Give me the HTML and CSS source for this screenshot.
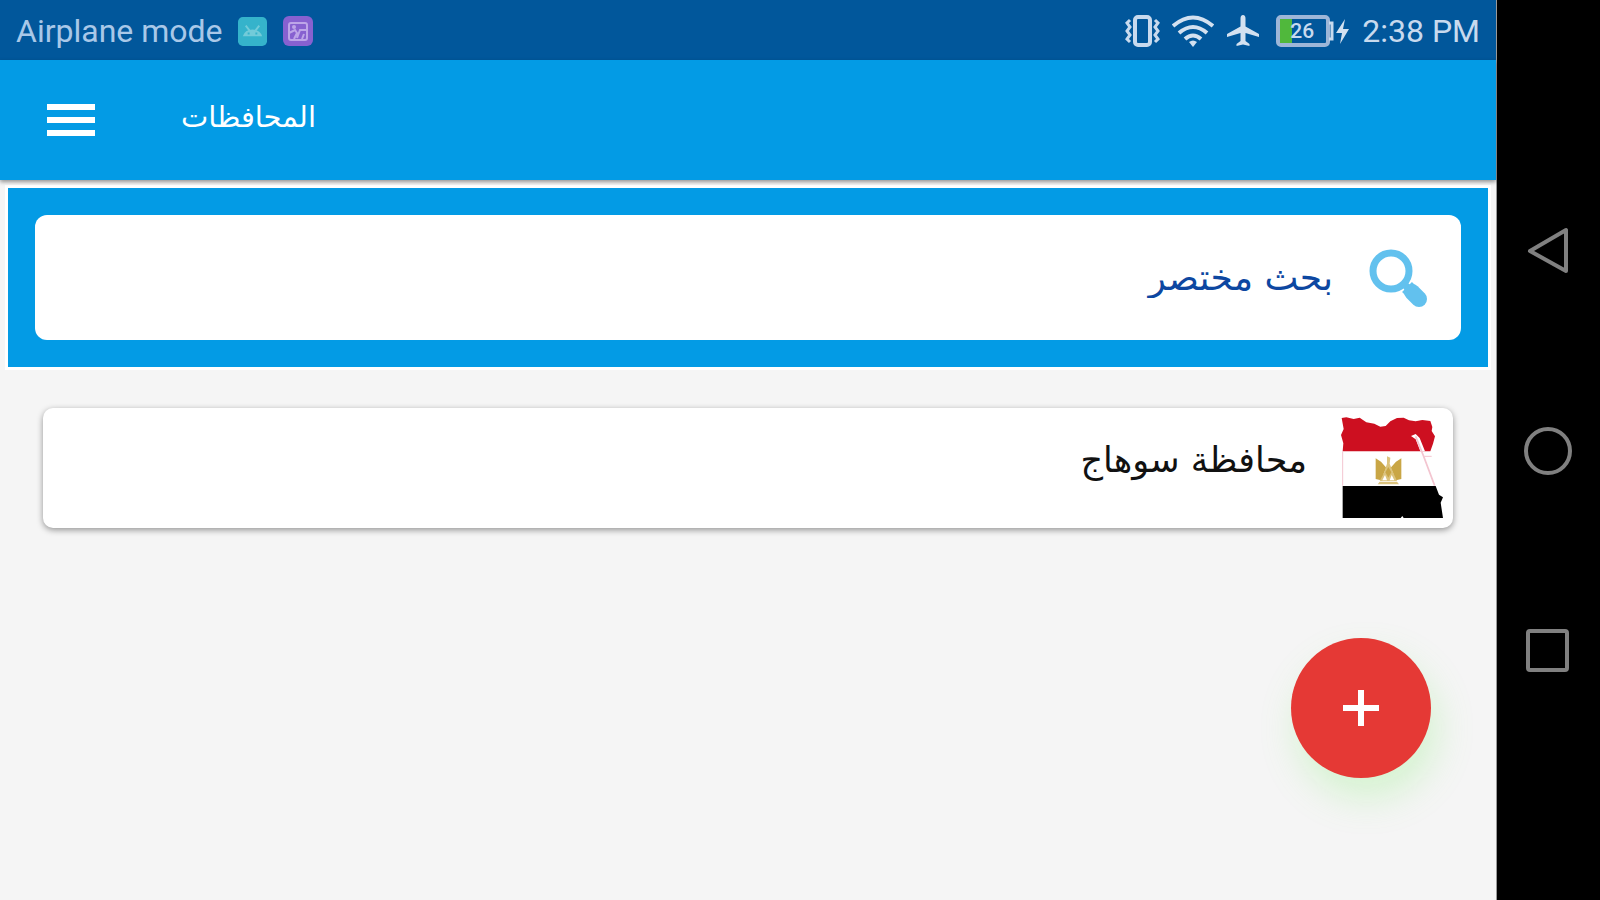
FILE: index.html
```html
<!DOCTYPE html>
<html lang="ar">
<head>
    <meta charset="UTF-8">
    <meta name="viewport" content="width=device-width, initial-scale=1">
    <title>المحافظات</title>
    <link rel="stylesheet" href="styles.css">
</head>
<body>
    <div class="screen">
        <div class="status-bar">
            <span class="carrier" lang="en">Airplane mode</span>
            <svg class="notice" viewBox="0 0 30 30">
                <rect width="30" height="30" rx="5" fill="#35b3cb"/>
                <path d="M5 20q2-7 10-7t10 7z" fill="#72cbd9"/>
                <path d="M8 9l4 5M22 9l-4 5" stroke="#72cbd9" stroke-width="2"/>
                <path d="M10 17h2M18 17h2" stroke="#35b3cb" stroke-width="2"/>
            </svg>
            <svg class="notice notice-photo" viewBox="0 0 30 30">
                <rect width="30" height="30" rx="6" fill="#8761d0"/>
                <g fill="none" stroke="#bda5e8" stroke-width="2">
                    <rect x="6" y="7" width="18" height="17" rx="2"/>
                    <path d="M6 17l6-3 2 3-3 6M14 22l3-8h7M19 23l2-5"/>
                </g>
                <circle cx="11" cy="11" r="2" fill="#bda5e8"/>
            </svg>
            <div class="status-icons" lang="en">
                <svg width="36" height="32" viewBox="0 0 36 32" fill="none" stroke="#c8daee">
                    <rect x="11" y="2" width="15" height="28" rx="3" stroke-width="4"/>
                    <path d="M6 5L3 8l3 4-3 4 3 4-3 4 3 3M31 5l3 3-3 4 3 4-3 4 3 4-3 3" stroke-width="3"/>
                </svg>
                <svg class="wifi" width="42" height="32" viewBox="0 0 42 32" fill="none" stroke="#d3e1f0" stroke-width="4">
                    <path d="M1 11q20-17 40 0M7 18q14-12 28 0M13 24q8-7 16 0"/>
                    <path d="M17 27q4-3 8 0l-4 5z" fill="#d3e1f0" stroke="none"/>
                </svg>
                <svg class="plane" width="34" height="32" viewBox="0 0 34 32">
                    <path d="M14.500 3.500a2.500 3.500 0 0 1 5 0v8L33 19v3l-13.500-4v8l4 3v2L17 29.500 10.500 31v-2l4-3v-8L1 22v-3l13.500-7.500z" fill="#d3e1f0"/>
                </svg>
                <div class="battery">
                    <svg width="74" height="34" viewBox="0 0 74 34">
                        <rect x="2" y="3" width="50" height="28" rx="3" fill="none" stroke="#9db6d8" stroke-width="4"/>
                        <path d="M53 9h3v16h-3" fill="none" stroke="#c8daee" stroke-width="3"/>
                        <rect x="4" y="5" width="12" height="24" fill="#50b83c"/>
                        <path d="M69 5l-9 14h6l-2 11 9-15h-6z" fill="#d3e1f0"/>
                    </svg>
                    <span class="level">26</span>
                </div>
                <span class="clock">2:38 PM</span>
            </div>
        </div>

        <header class="app-bar">
            <button class="menu" type="button" aria-label="القائمة">
                <svg width="48" height="34" viewBox="0 0 48 34" fill="#fff">
                    <path d="M0 1h48v6H0zM0 14h48v6H0zM0 27h48v6H0z"/>
                </svg>
            </button>
            <h1>المحافظات</h1>
        </header>

        <main>
            <form class="search-panel" role="search" dir="rtl">
                <div class="search-box">
                    <label for="search" aria-label="بحث">
                        <svg width="60" height="60" viewBox="0 0 60 60" fill="none" stroke="#62c1ee">
                            <circle cx="22" cy="23" r="18" stroke-width="7"/>
                            <path d="M34 35l5 5" stroke-width="7"/>
                            <path d="M38 39l6 6" stroke-width="14"/>
                            <path d="M43 44l7 7" stroke-width="16" stroke-linecap="round"/>
                        </svg>
                    </label>
                    <input id="search" type="text" placeholder="بحث مختصر">
                </div>
            </form>

            <ul class="list" dir="rtl">
                <li class="card">
                    <svg class="flag" width="102" height="103" viewBox="0 0 306 309">
                        <path d="M2 3l14-2 22 5 18-4 20 14 24 4 18 9 16-2 14-14 20-10 20-1 16 8 20 3 20-4 24 3 6 18-2 12 10 16-6 22-8 23H5l2-24-7-25 8-18z" fill="#cd0f20"/>
                        <path d="M5 103v103M250 118h22" fill="none" stroke="#f3c5d0" stroke-width="3"/>
                        <path d="M210 57l14-6 12 12 16 40h-14l-14-36z" fill="#fff"/>
                        <path d="M224 58l24 60 33 88" fill="none" stroke="#f3c5d0" stroke-width="5"/>
                        <path d="M5 207h279l10 26 12 8-7 16 7 46H188l-4-6-5 6H5z" fill="#000"/>
                        <g fill="#c9a646">
                            <path d="M104 124l16 10 16 18-8 18 4 16-12 4-16-4z"/>
                            <path d="M181 124l-16 10-16 18 8 18-4 16 12 4 16-4z"/>
                            <path d="M116 194h52l6 8h-64z" fill="#dcc37d"/>
                            <path d="M138 118l10 4-2 18 12 30 10 22h-52l12-22 10-30z" fill="#dcc37d"/>
                            <path d="M142 150l9 16-9 16-9-16z"/>
                            <path d="M124 190l8-16 6 16zM160 190l-8-16-6 16z" fill="#fff"/>
                        </g>
                    </svg>
                    <span class="name">محافظة سوهاج</span>
                </li>
            </ul>
        </main>

        <button class="fab" type="button" aria-label="إضافة">
            <svg width="38" height="38" viewBox="0 0 38 38" fill="none" stroke="#fff" stroke-width="6">
                <path d="M19 1v36M1 19h36"/>
            </svg>
        </button>
    </div>

    <nav class="nav-keys">
        <button type="button" aria-label="رجوع">
            <svg width="50" height="50" viewBox="0 0 50 50">
                <path d="M42 5v41L6 26z"/>
            </svg>
        </button>
        <button type="button" aria-label="الرئيسية">
            <svg width="50" height="50" viewBox="0 0 50 50">
                <circle cx="24" cy="26" r="22"/>
            </svg>
        </button>
        <button type="button" aria-label="التطبيقات">
            <svg width="50" height="50" viewBox="0 0 50 50">
                <rect x="4" y="6" width="39" height="39" rx="2"/>
            </svg>
        </button>
    </nav>
</body>
</html>
```
FILE: styles.css
```css
* {
    box-sizing: border-box;
}
body {
    margin: 0;
    min-height: 100vh;
    display: flex;
    background: #000;
    font-family: "DejaVu Sans", sans-serif;
}
svg {
    display: block;
    flex: none;
}
button {
    border: none;
    padding: 0;
    background: none;
    cursor: pointer;
}
.screen {
    position: relative;
    flex: 1;
    min-width: 0;
    background: #f5f5f5;
    border-right: 1px solid #999;
}

/* status bar */
.status-bar {
    height: 60px;
    padding: 2px 16px 0;
    display: flex;
    align-items: center;
    background: #01579b;
    color: #c8daee;
    font-family: Roboto, sans-serif;
    font-size: 32px;
    white-space: nowrap;
}
.carrier {
    color: #a9c8e8;
}
.notice {
    width: 29px;
    height: 29px;
    margin-left: 15px;
}
.notice-photo {
    width: 30px;
    height: 30px;
    margin-left: 16px;
}
.status-icons {
    margin-left: auto;
    display: flex;
    align-items: center;
}
.wifi {
    margin-left: 12px;
}
.plane {
    margin-left: 12px;
}
.battery {
    position: relative;
    margin: 0 12px 0 16px;
}
.level {
    position: absolute;
    top: 5px;
    left: 14px;
    font-size: 21px;
    font-weight: 500;
    line-height: 24px;
}

/* app bar */
.app-bar {
    position: relative;
    height: 120px;
    padding-left: 47px;
    display: flex;
    align-items: center;
    background: #039be5;
    box-shadow: 0 2px 4px rgba(0, 0, 0, 0.4);
}
.app-bar h1 {
    margin: 0 0 0 86px;
    padding-bottom: 6px;
    color: #fff;
    font-size: 29px;
    font-weight: normal;
}

/* search */
main {
    padding: 8px;
}
.search-panel {
    padding: 27px;
    background: #039be5;
    box-shadow: 0 0 0 3px #fff;
}
.search-box {
    height: 125px;
    padding: 0 32px;
    display: flex;
    align-items: center;
    gap: 36px;
    background: #fff;
    border-radius: 12px;
}
.search-box input {
    flex: 1;
    min-width: 0;
    height: 100%;
    border: none;
    padding: 0;
    outline: none;
    background: none;
    color: #0d47a1;
    font-family: inherit;
    font-size: 36px;
    line-height: 60px;
}
.search-box input::placeholder {
    color: #0d47a1;
    opacity: 1;
    line-height: 60px;
}

/* list */
.list {
    list-style: none;
    margin: 0;
    padding: 41px 35px;
}
.card {
    height: 120px;
    padding: 0 10px;
    display: flex;
    align-items: center;
    gap: 34px;
    background: #fff;
    border-radius: 10px;
    box-shadow: 0 2px 6px rgba(0, 0, 0, 0.4);
}
.name {
    padding-bottom: 16px;
    color: #111;
    font-size: 35px;
}

.fab {
    position: absolute;
    right: 65px;
    bottom: 122px;
    width: 140px;
    height: 140px;
    display: flex;
    align-items: center;
    justify-content: center;
    border-radius: 50%;
    background: #e53935;
    box-shadow: 6px 20px 36px rgba(120, 240, 100, 0.25);
}

/* android keys */
.nav-keys {
    width: 103px;
    padding: 150px 0;
    display: flex;
    flex-direction: column;
    align-items: center;
    justify-content: space-around;
}
.nav-keys svg {
    fill: none;
    stroke: #808080;
    stroke-width: 4;
    stroke-linejoin: round;
}
```
